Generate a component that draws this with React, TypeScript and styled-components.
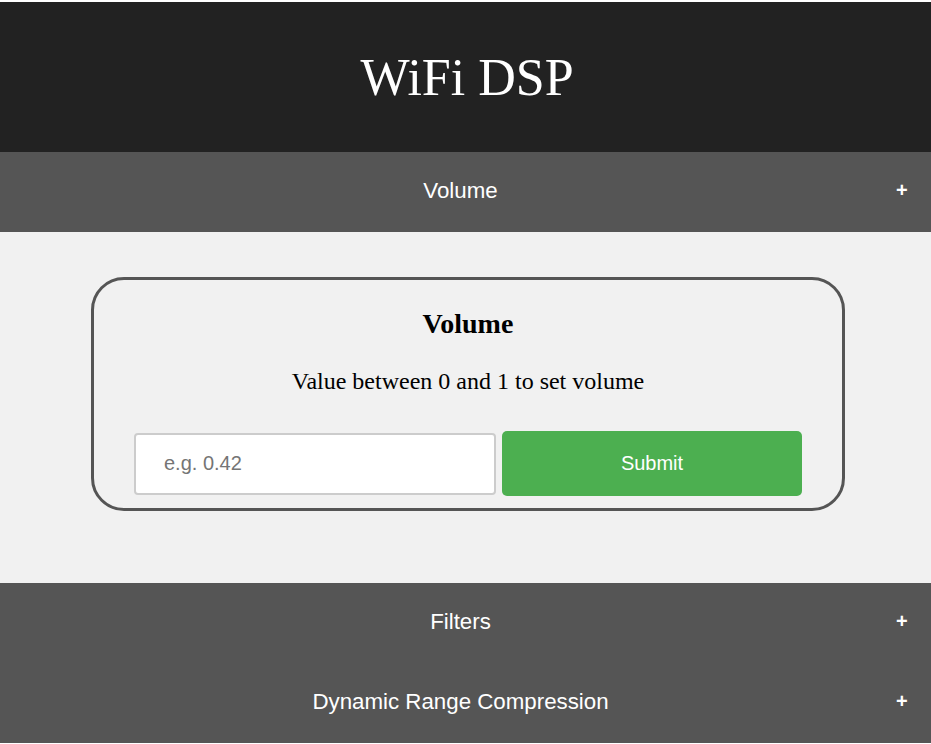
import React from "react";
import styled, { createGlobalStyle } from "styled-components";

const GlobalStyle = createGlobalStyle`
  html, body {
    margin: 0;
    padding: 0;
    background: #ffffff;
  }
  body {
    font-family: "Liberation Serif", "Times New Roman", serif;
  }
  * { box-sizing: border-box; }
`;

const Page = styled.div`
  padding-top: 2px;
  display: flex;
  flex-direction: column;
`;

const Header = styled.header`
  height: 150px;
  background: #222222;
  display: flex;
  align-items: center;
  justify-content: center;
`;

const Title = styled.h1`
  margin: 0 0 0 3px;
  font-family: "Liberation Serif", "Times New Roman", serif;
  font-weight: normal;
  font-size: 52px;
  color: #ffffff;
`;

const AccordionButton = styled.button`
  display: flex;
  align-items: center;
  width: 100%;
  height: 80px;
  padding: 0 24px 0 25px;
  border: none;
  outline: none;
  background: #555555;
  color: #ffffff;
  font-family: "Liberation Sans", Arial, sans-serif;
  font-size: 22.3px;
  cursor: pointer;
`;

const AccordionLabel = styled.span`
  flex: 1;
  text-align: center;
  margin-top: -2px;
`;

const Plus = styled.span`
  width: 11px;
  font-size: 20px;
  font-weight: bold;
  line-height: 1;
  text-align: center;
  margin-top: -4px;
`;

const Panel = styled.div`
  background: #f1f1f1;
  padding: 45px 86px 72px 91px;
`;

const Card = styled.div`
  border: 3px solid #555555;
  border-radius: 33px;
  padding: 0 40px 12px 40px;
  display: flex;
  flex-direction: column;
  align-items: center;
`;

const CardTitle = styled.h2`
  margin: 28px 0 0 0;
  font-size: 28px;
  font-weight: bold;
  color: #000000;
`;

const CardText = styled.p`
  margin: 28px 0 0 0;
  font-size: 24px;
  color: #000000;
`;

const FormRow = styled.form`
  margin-top: 36px;
  width: 100%;
  display: flex;
  align-items: center;
  gap: 6px;
`;

const ValueInput = styled.input`
  flex: 0 0 362px;
  height: 62px;
  border: 2px solid #cccccc;
  border-radius: 4px;
  background: #ffffff;
  padding: 0 28px;
  font-family: "Liberation Sans", Arial, sans-serif;
  font-size: 20px;
  color: #333;
  &::placeholder {
    color: #757575;
  }
`;

const SubmitButton = styled.button`
  flex: 1;
  height: 65px;
  border: none;
  border-radius: 5px;
  background: #4caf50;
  color: #ffffff;
  font-family: "Liberation Sans", Arial, sans-serif;
  font-size: 20px;
  cursor: pointer;
`;

const sections = ["Volume", "Filters", "Dynamic Range Compression"];

export default function App() {
  return (
    <>
      <GlobalStyle />
      <Page>
        <Header>
          <Title>WiFi DSP</Title>
        </Header>
        <AccordionButton>
          <AccordionLabel>{sections[0]}</AccordionLabel>
          <Plus>+</Plus>
        </AccordionButton>
        <Panel>
          <Card>
            <CardTitle>Volume</CardTitle>
            <CardText>Value between 0 and 1 to set volume</CardText>
            <FormRow onSubmit={(e) => e.preventDefault()}>
              <ValueInput type="text" placeholder="e.g. 0.42" />
              <SubmitButton type="submit">Submit</SubmitButton>
            </FormRow>
          </Card>
        </Panel>
        {sections.slice(1).map((s) => (
          <AccordionButton key={s}>
            <AccordionLabel>{s}</AccordionLabel>
            <Plus>+</Plus>
          </AccordionButton>
        ))}
      </Page>
    </>
  );
}
